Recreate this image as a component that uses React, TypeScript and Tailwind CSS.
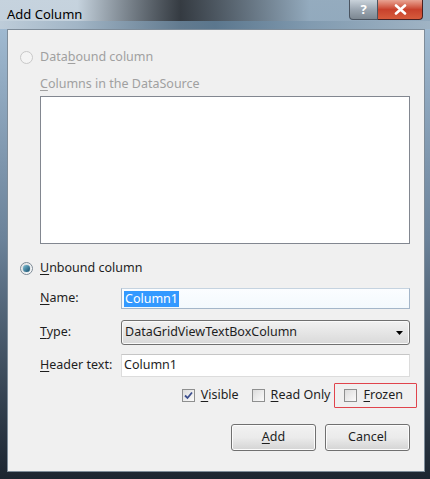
import React from "react";

const font = { fontFamily: '"Noto Sans", "Open Sans", sans-serif' };

function Radio({ checked, disabled }: { checked?: boolean; disabled?: boolean }) {
  return (
    <span
      className={`flex h-[13px] w-[13px] shrink-0 items-center justify-center rounded-full border ${
        disabled ? "border-[#c8c8c8] bg-[#f4f4f4]" : "border-[#7d8a96] bg-gradient-to-br from-[#e6e6e6] to-[#ffffff]"
      }`}
    >
      {checked && (
        <span className="h-[7px] w-[7px] rounded-full bg-gradient-to-br from-[#7fc3d8] to-[#0d4c6b] shadow-[0_0_1px_#1b5f86]" />
      )}
    </span>
  );
}

function Check({ checked }: { checked?: boolean }) {
  return (
    <span className="flex h-[13px] w-[13px] shrink-0 items-center justify-center border border-[#8e8f8f] bg-gradient-to-br from-[#dcdcdc] to-[#fbfbfb]">
      {checked && (
        <svg width="9" height="9" viewBox="0 0 9 9">
          <path d="M1 4.5 L3.5 7 L8 1.5" stroke="#3d4f8e" strokeWidth="1.8" fill="none" />
        </svg>
      )}
    </span>
  );
}

function U({ children }: { children: React.ReactNode }) {
  return <span className="underline underline-offset-[2px]">{children}</span>;
}

function Btn({ children }: { children: React.ReactNode }) {
  return (
    <button className="flex h-[27px] w-[85px] items-center justify-center rounded-[3px] border border-[#707070] bg-gradient-to-b from-[#f2f2f2] via-[#ebebeb] to-[#d4d4d4] text-[#1e1e1e] shadow-[inset_0_0_0_1px_#fcfcfc]">
      {children}
    </button>
  );
}

export default function App() {
  return (
    <div
      style={font}
      className="flex h-[479px] w-[430px] flex-col overflow-hidden bg-gradient-to-b from-[#a7c1d8] via-[#6b8299] to-[#1c2530] text-[12.5px] text-[#1e1e1e]"
    >
      {/* title bar */}
      <div className="relative flex h-[29px] shrink-0 items-center bg-gradient-to-b from-[#c4d2de] to-[#a9bccc] pl-[7px]">
        <div className="absolute inset-0 bg-gradient-to-r from-[#c6d3de] from-[18%] via-[#262b31] via-[42%] to-[#8fa7bb] to-[72%] opacity-90" />
        <div className="absolute inset-x-0 bottom-0 h-[8px] bg-gradient-to-r from-[#bccbd8] via-[#5f7f99] to-[#a3b6c6] opacity-80" />
        <span className="relative text-[13px] text-black">Add Column</span>
        <div className="absolute right-[7px] top-0 flex h-[20px]">
          <div className="flex w-[29px] items-center justify-center rounded-bl-[4px] border border-t-0 border-[#4a5460] bg-gradient-to-b from-[#c9d2da] via-[#9ba6b1] to-[#7c8791] text-[13px] font-bold text-white">
            ?
          </div>
          <div className="flex w-[45px] items-center justify-center rounded-br-[4px] border border-l-0 border-t-0 border-[#4a2020] bg-gradient-to-b from-[#e8a393] via-[#c8412c] to-[#d65b3c]">
            <svg width="13" height="11" viewBox="0 0 13 11">
              <path d="M2 1.5 L11 9.5 M11 1.5 L2 9.5" stroke="white" strokeWidth="2.6" strokeLinecap="round" />
            </svg>
          </div>
        </div>
      </div>

      {/* client area */}
      <div className="mb-[7px] ml-[7px] mr-[5px] flex flex-1 flex-col border border-[#7e8c99] bg-[#f0f0f0] pl-[32px] pr-[14px]">
        <div className="mt-[19px] -ml-[20px] flex h-[16px] items-center gap-[7px] text-[#a0a0a0]">
          <Radio disabled />
          <span>
            Data<U>b</U>ound column
          </span>
        </div>
        <div className="mt-[11px] flex h-[16px] items-center text-[#a0a0a0]">
          <span>
            <U>C</U>olumns in the DataSource
          </span>
        </div>
        <div className="mt-[4px] h-[148px] border border-[#828790] bg-white" />

        <div className="mt-[16px] -ml-[20px] flex h-[16px] items-center gap-[7px]">
          <Radio checked />
          <span>
            <U>U</U>nbound column
          </span>
        </div>

        <div className="mt-[12px] flex h-[21px] items-center">
          <span className="w-[81px] shrink-0">
            <U>N</U>ame:
          </span>
          <div className="flex h-full flex-1 items-center border border-[#a4b6c9] border-t-[#c5d3e0] bg-gradient-to-b from-[#fbfdff] to-[#f3f9fd] pl-[2px]">
            <span className="bg-[#3399ff] px-[1px] leading-[16px] text-white">Column1</span>
          </div>
        </div>

        <div className="mt-[11px] flex h-[25px] items-center">
          <span className="w-[81px] shrink-0">
            <U>T</U>ype:
          </span>
          <div className="flex h-full flex-1 items-center justify-between rounded-[3px] border border-[#707070] bg-gradient-to-b from-[#f2f2f2] to-[#d9d9d9] pl-[3px] pr-[6px] shadow-[inset_0_0_0_1px_#fafafa]">
            <span>DataGridViewTextBoxColumn</span>
            <svg width="7" height="4" viewBox="0 0 7 4">
              <path d="M0 0 H7 L3.5 4 Z" fill="#000" />
            </svg>
          </div>
        </div>

        <div className="mt-[9px] flex h-[23px] items-center">
          <span className="w-[81px] shrink-0">
            <U>H</U>eader text:
          </span>
          <div className="flex h-full flex-1 items-center border border-[#dcdcdc] border-t-[#c6c6c6] bg-white pl-[2px]">
            Column1
          </div>
        </div>

        <div className="mt-[6px] -mr-[7px] flex h-[25px] items-center justify-end">
          <div className="flex items-center gap-[6px]">
            <Check checked />
            <span>
              <U>V</U>isible
            </span>
          </div>
          <div className="ml-[13px] flex items-center gap-[6px]">
            <Check />
            <span>
              <U>R</U>ead Only
            </span>
          </div>
          <div className="ml-[4px] flex h-full items-center gap-[6px] rounded-[1px] outline outline-1 -outline-offset-1 outline-[#e0444c] pl-[10px] pr-[14px]">
            <Check />
            <span>
              <U>F</U>rozen
            </span>
          </div>
        </div>

        <div className="mt-[16px] flex justify-end gap-[9px]">
          <Btn>
            <U>A</U>dd
          </Btn>
          <Btn>Cancel</Btn>
        </div>
      </div>
    </div>
  );
}
